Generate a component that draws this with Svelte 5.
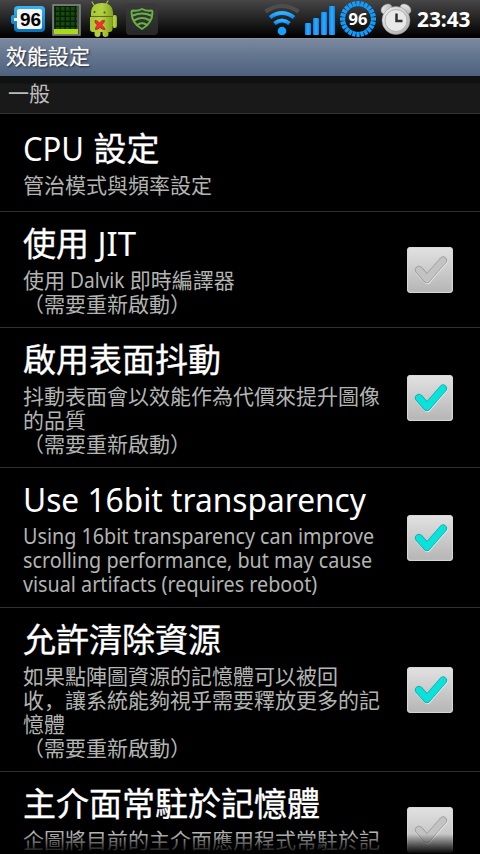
<script>
  const reboot = [['（', 'punct'], ['需要重新啟動'], ['）', 'punct']];
  const rows = [
    { title: [['CPU', 'cpu'], [' 設定']], lines: [[['管治模式與頻率設定']]] },
    { title: [['使用 '], ['JIT', 'jit']], lines: [[['使用 '], ['Dalvik', 'dalvik'], [' 即時編譯器']], reboot], box: 'off' },
    { title: [['啟用表面抖動']], lines: [[['抖動表面會以效能作為代價來提升圖像']], [['的品質']], reboot], box: 'on' },
    {
      title: [['Use 16bit transparency', 'big']],
      lines: [
        [['Using 16bit transparency can improve', 'lat']],
        [['scrolling performance, but may cause', 'lat']],
        [['visual artifacts (requires reboot)', 'lat']]
      ],
      box: 'on'
    },
    {
      title: [['允許清除資源']],
      lines: [[['如果點陣圖資源的記憶體可以被回']], [['收'], ['，', 'punct'], ['讓系統能夠視乎需要釋放更多的記']], [['憶體']], reboot],
      box: 'on'
    },
    { title: [['主介面常駐於記憶體']], lines: [[['企圖將目前的主介面應用程式常駐於記']]], box: 'off', last: true }
  ];
  const ticks = Array.from({ length: 24 }, (_, i) => i * 15);
</script>

{#snippet runs(parts)}{#each parts as [text, kind]}<span class={kind} lang={kind === 'punct' ? 'zh-CN' : undefined}>{text}</span>{/each}{/snippet}

<div class="screen">
  <header class="status">
    <svg class="left" width="165" height="38" viewBox="0 0 165 38">
      <defs>
        <linearGradient id="bat" x2="0" y2="1"><stop stop-color="#35b5f5" /><stop offset="1" stop-color="#0870bd" /></linearGradient>
        <linearGradient id="droid"><stop stop-color="#a7c832" /><stop offset=".5" stop-color="#b4d143" /><stop offset="1" stop-color="#83a51e" /></linearGradient>
        <linearGradient id="tile" x2="0" y2="1"><stop stop-color="#3b3b3b" /><stop offset="1" stop-color="#272727" /></linearGradient>
        <pattern id="grid" x="55" y="6" width="5" height="5" patternUnits="userSpaceOnUse"><rect width="5" height="5" fill="#082007" /><rect x="1" y="1" width="3.500" height="3.500" fill="#174b0c" /></pattern>
      </defs>
      <path d="M18 6h23q4 0 4 4v18q0 4-4 4H18q-4 0-4-4v-4h-1q-2 0-2-2v-5q0-2 2-2h1v-5q0-4 4-4z" fill="url(#bat)" />
      <path d="M19 9h21q2 0 2 2v16q0 2-2 2H19q-2 0-2-2v-6h-3v-3h3v-7q0-2 2-2z" fill="#f4f4f4" />
      <text x="30.500" y="26" text-anchor="middle" class="batnum">96</text>
      <rect x="53" y="5" width="27" height="30" fill="#4c4f4c" stroke="#858985" stroke-width="1.5" />
      <rect x="54" y="6" width="23" height="23" fill="url(#grid)" />
      <rect x="54" y="29" width="24" height="5" fill="#a8db13" />
      <g fill="url(#droid)">
        <path d="M94 5l-2-3M106 4l2-3" stroke="#a5c936" stroke-width="1.3" stroke-linecap="round" />
        <path d="M91 16q-1-13 11-13t11 13z" />
        <path d="M90 17h22.500v12q0 3-3 3h-1v2q0 3-3 3t-3-3v-2h-2v2q0 3-3 3t-3-3v-2H93q-3 0-3-3z" />
        <rect x="112.500" y="15" width="4.500" height="13" rx="2.200" />
      </g>
      <path d="M91 16.400h21.500" stroke="#75901d" stroke-width=".8" />
      <circle cx="94.500" cy="12" r="1" fill="#465518" /><circle cx="104.500" cy="12.500" r="1" fill="#465518" />
      <path d="M95 20.500q3 0 4.500 2.500 2-3 5-2.500 0 2-3 4.500 3 2 3.500 4.500-3 0-5-2-2 2-4.500 2 0-3 2-4.500-3-2-2.500-4.500z" fill="#f33131" stroke="#c72525" />
      <rect x="126" y="3" width="32" height="32" rx="4" fill="url(#tile)" />
      <g fill="none" stroke="#68b245" stroke-width="1.900" stroke-linecap="round" stroke-linejoin="round">
        <path d="M142 9q5 2.500 9 1.500 1.500 0 1.500 1.500c0 7.500-4 13.500-10.500 17-6.500-3.500-10.500-9.500-10.500-17q0-1.500 1.500-1.500 4 1 9-1.500z" />
        <path d="M133 15.500q9-4 18 0M135 20q7-4 14 0M138 24.500q4-2.500 8 0" stroke-width="2.200" />
      </g>
    </svg>

    <div class="right">
      <svg width="158" height="38" viewBox="260 0 158 38">
        <defs>
          <linearGradient id="wave" x2="0" y2="1"><stop stop-color="#30b2ff" /><stop offset="1" stop-color="#078aff" /></linearGradient>
          <linearGradient id="bar"><stop stop-color="#0782ec" /><stop offset=".5" stop-color="#2baeff" /><stop offset="1" stop-color="#0782ec" /></linearGradient>
          <linearGradient id="metal" x2="1" y2="1"><stop stop-color="#f3f3f3" /><stop offset="1" stop-color="#a9a9a9" /></linearGradient>
        </defs>
        <g fill="none" stroke-width="4">
          <path d="M265.500 11.500q16.500-11 33 0" stroke="#4d4d4d" />
          <path d="M270 17.500q12-9 24 0" stroke="url(#wave)" />
          <path d="M274.500 23.500q7.500-6 15 0" stroke="url(#wave)" />
        </g>
        <circle cx="282" cy="31" r="4.300" fill="#16a0ff" />
        <g fill="url(#bar)">
          <rect x="305" y="23" width="6" height="12" rx=".7" /><rect x="313" y="18" width="6" height="17" rx=".7" />
          <rect x="321" y="12" width="6" height="23" rx=".7" /><rect x="329" y="6" width="6" height="29" rx=".7" />
        </g>
        {#each ticks as angle}
          <rect x="356.300" y="1" width="3.400" height="5.200" fill="#119cff" transform="rotate({angle} 358 19)" />
        {/each}
        <text x="358" y="25" text-anchor="middle" class="ringnum">96</text>
        <g fill="url(#metal)" stroke="#8b8b8b" stroke-width=".5">
          <ellipse cx="386.500" cy="9" rx="6" ry="4.500" transform="rotate(-38 386.500 9)" />
          <ellipse cx="405.500" cy="9" rx="6" ry="4.500" transform="rotate(38 405.500 9)" />
          <circle cx="396" cy="20.500" r="14" />
        </g>
        <circle cx="396" cy="20.500" r="11" fill="#e8e8e8" stroke="#b2b2b2" />
        <path d="M396.500 13.500V21h6" fill="none" stroke="#303030" stroke-width="2.500" />
      </svg>
      <span class="clock">23:43</span>
    </div>
  </header>
  <div class="bar">效能設定</div>
  <div class="section">一般</div>

  <main>
    {#each rows as row}
      <section class="row" class:last={row.last}>
        <div class="copy">
          <h2>{@render runs(row.title)}</h2>
          {#each row.lines as line}<p>{@render runs(line)}</p>{/each}
        </div>
        {#if row.box}
          <div class="check">
            <svg width="46" height="46" viewBox="0 0 46 46">
              <path d="M12.500 24.500l8 8.500L36.500 14.500" class="glow" />
              <path d="M12 23l8 9L36 13.500" class="edge {row.box}" />
              <path d="M12 23l8 9L36 13.500" class="tick {row.box}" />
            </svg>
          </div>
        {/if}
      </section>
    {/each}
  </main>
  <div class="fade"></div>
</div>

<style>
  :global(body) { margin: 0; background: #000; }
  .screen { position: relative; width: 480px; height: 854px; overflow: hidden; display: flex; flex-direction: column; background: #000; color: #fff; font-family: "Noto Sans", "Noto Sans CJK TC", sans-serif; }
  .status { flex: none; height: 38px; display: flex; justify-content: space-between; background: linear-gradient(#464646, #262626 45%, #050505 90%, #000); }
  .status svg { display: block; flex: none; }
  .right { display: flex; width: 220px; }
  .clock { font: 700 20.800px/38px "Open Sans", sans-serif; margin-left: -1px; white-space: nowrap; }
  .batnum { font: 700 19px "Liberation Sans", sans-serif; fill: #000; }
  .ringnum { font: 700 16.500px "Open Sans", sans-serif; fill: #fff; }
  .bar { flex: none; box-sizing: border-box; height: 38px; padding-left: 6px; font: 21px/32px "Noto Sans CJK TC", sans-serif; background: linear-gradient(#7a899f, #63758f 45%, #4e627e); border-top: 1px solid #8793a5; text-shadow: 1px 1px 2px #18202c, 0 0 1px #fff; }
  .section { flex: none; box-sizing: border-box; height: 38px; padding-left: 8px; font: 21px/33px "Noto Sans CJK TC", sans-serif; color: #bdbdbd; background: linear-gradient(#101111 0 7px, #191919 8px); border-bottom: 1px solid #353535; }
  main { flex: none; }
  .row { box-sizing: border-box; min-height: 98px; padding: 12px 27px 11px 23px; display: flex; align-items: center; justify-content: space-between; border-bottom: 1px solid #303030; }
  .row.last { height: 118px; align-items: flex-start; border-bottom: 0; }
  .row.last .check { margin-top: 23px; }
  .copy { width: 360px; }
  h2 { margin: 0 0 4px; height: 40px; font-size: 33px; line-height: 40px; font-weight: 400; white-space: pre; -webkit-text-stroke: .35px #fff; }
  h2 .big, h2 .cpu, h2 .jit { -webkit-text-stroke: 0; }
  p { margin: 0; height: 24px; font-size: 21px; line-height: 24px; color: #b2b5b2; white-space: pre; }
  .big, .cpu, .jit, .lat, .dalvik { display: inline-block; transform-origin: left; line-height: inherit; vertical-align: baseline; }
  .big { transform: scaleX(.96); }
  .cpu { transform: scaleX(.94); margin-right: -3px; }
  .lat { transform: scaleX(.94); }
  .dalvik { transform: scaleX(.91); margin-right: -6px; }
  .punct { font-family: "Noto Sans CJK SC", sans-serif; line-height: 20px; }
  .check { flex: none; width: 46px; height: 46px; border-radius: 4px; background: linear-gradient(#e2e2e2, #c9c9c9 55%, #b5b5b5); box-shadow: inset 0 0 1px 1px #d9d9d9; }
  .check svg { display: block; }
  .check path { fill: none; stroke-linecap: round; stroke-linejoin: round; }
  .glow { stroke: #e6e6e6; stroke-width: 8; }
  .edge { stroke-width: 8; stroke: #999; }
  .edge.on { stroke: #10a7a3; }
  .tick { stroke-width: 6.5; stroke: #c3c3c3; }
  .tick.on { stroke: #0be2dc; }
  .fade { position: absolute; left: 0; right: 0; bottom: 0; height: 20px; background: linear-gradient(transparent, #000); }
</style>
